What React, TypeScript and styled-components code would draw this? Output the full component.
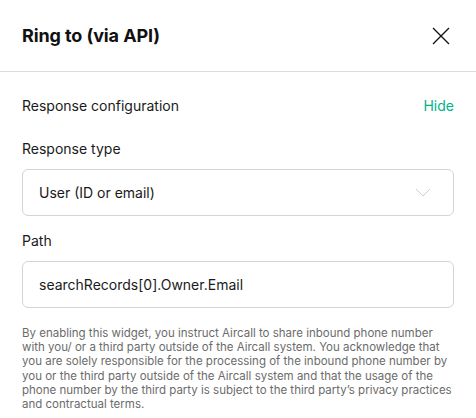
import React from "react";
import styled, { createGlobalStyle } from "styled-components";

const Global = createGlobalStyle`
  html, body { margin: 0; padding: 0; background: #fff; }
  body { font-family: Inter, "Noto Sans", sans-serif; color: #1a1a1a; -webkit-font-smoothing: antialiased; }
  * { box-sizing: border-box; }
`;

const Panel = styled.div`
  width: 476px;
  height: 418px;
  overflow: hidden;
  display: flex;
  flex-direction: column;
`;

const Header = styled.header`
  flex-shrink: 0;
  height: 72px;
  border-bottom: 1px solid #dcdcdc;
  display: flex;
  align-items: center;
  justify-content: space-between;
  padding: 0 25px 0 22px;
`;

const Title = styled.h1`
  margin: 0;
  font-size: 18px;
  font-weight: 700;
  color: #111;
  letter-spacing: -0.1px;
`;

const CloseButton = styled.button`
  border: 0;
  background: none;
  padding: 0;
  width: 20px;
  height: 20px;
  display: flex;
  align-items: center;
  justify-content: center;
  cursor: pointer;
`;

const Body = styled.div`
  flex-shrink: 0;
  padding: 24px 22px 0 22px;
  display: flex;
  flex-direction: column;
`;

const SectionRow = styled.div`
  display: flex;
  justify-content: space-between;
  align-items: center;
  height: 18px;
  margin-bottom: 26px;
`;

const SectionTitle = styled.span`
  font-size: 14px;
  color: #1a1a1a;
`;

const HideLink = styled.span`
  font-size: 14px;
  color: #00b388;
`;

const Label = styled.div`
  font-size: 14px;
  color: #1a1a1a;
  height: 18px;
  line-height: 18px;
  margin-bottom: 11px;
`;

const Field = styled.div`
  height: 47px;
  border: 1px solid #d4d4d4;
  border-radius: 6px;
  display: flex;
  align-items: center;
  justify-content: space-between;
  padding: 0 22px 0 16px;
  font-size: 14px;
  color: #1a1a1a;
  margin-bottom: 16px;
`;

const Disclaimer = styled.p`
  margin: 0;
  padding-top: 2px;
  font-size: 11.5px;
  line-height: 14.2px;
  color: #6b6b6b;
`;

export default function App() {
  return (
    <>
      <Global />
      <Panel>
        <Header>
          <Title>Ring to (via API)</Title>
          <CloseButton aria-label="Close">
            <svg width="18" height="18" viewBox="0 0 18 18">
              <path d="M1 1L17 17M17 1L1 17" stroke="#111" strokeWidth="1.3" />
            </svg>
          </CloseButton>
        </Header>
        <Body>
          <SectionRow>
            <SectionTitle>Response configuration</SectionTitle>
            <HideLink>Hide</HideLink>
          </SectionRow>
          <Label>Response type</Label>
          <Field>
            User (ID or email)
            <svg width="16" height="9" viewBox="0 0 16 9">
              <path d="M1 1L8 8L15 1" stroke="#cfcfcf" strokeWidth="1" fill="none" />
            </svg>
          </Field>
          <Label>Path</Label>
          <Field>searchRecords[0].Owner.Email</Field>
          <Disclaimer>
            By enabling this widget, you instruct Aircall to share inbound phone number
            with you/ or a third party outside of the Aircall system. You acknowledge that
            you are solely responsible for the processing of the inbound phone number by
            you or the third party outside of the Aircall system and that the usage of the
            phone number by the third party is subject to the third party’s privacy practices
            and contractual terms.
          </Disclaimer>
        </Body>
      </Panel>
    </>
  );
}
